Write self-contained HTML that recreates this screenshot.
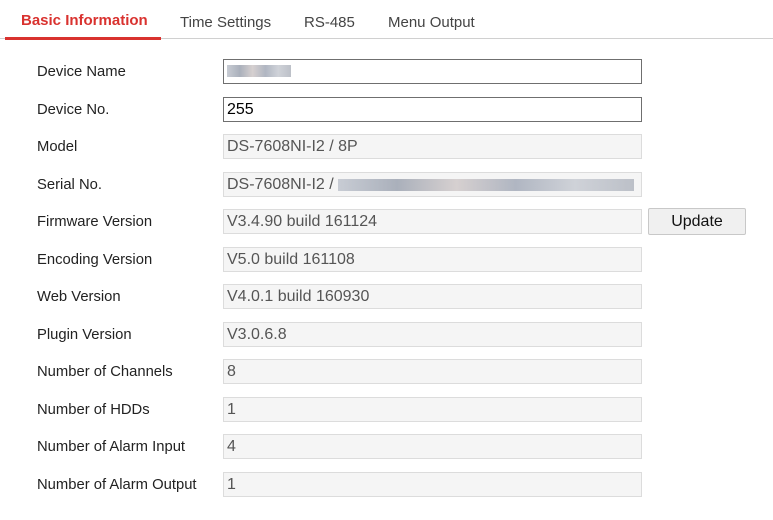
<!DOCTYPE html>
<html><head><style>
body{margin:0;width:773px;height:520px;background:#fff;font-family:"Liberation Sans",Arial,sans-serif;position:relative;overflow:hidden}
.tab{position:absolute;top:14px;font-size:15px;color:#444}
.line{position:absolute;left:0;top:38px;width:773px;height:1px;background:#d0d0d0}
.ul{position:absolute;left:5px;top:37px;width:156px;height:3px;background:#d9322f}
.lbl{position:absolute;left:37px;font-size:14.8px;color:#222;line-height:24px;margin-top:1px}
.in{position:absolute;left:223px;border:1px solid #dcdcdc;background:#f5f5f5;color:#555;font-size:16px;line-height:23px;padding-left:3px;box-sizing:border-box;width:419px;height:25px}
.ed{border:1px solid #6f6f6f;background:#fff;color:#000}
.blur{display:inline-block;height:12px;vertical-align:middle;background:linear-gradient(90deg,#c8ccd4,#aab0bb 20%,#d6d0d0 40%,#b0b6c2 60%,#cfd2d8 80%,#bcc0c8)}
.btn{position:absolute;left:648px;top:208px;width:98px;height:27px;border:1px solid #c8c8c8;border-radius:2px;background:#f0f0f0;font-size:16px;line-height:26px;text-align:center;color:#111;box-sizing:border-box}
</style></head><body>
<div class="tab" style="left:21px;top:12px;color:#d9322f;font-weight:bold">Basic Information</div>
<div class="tab" style="left:180px">Time Settings</div>
<div class="tab" style="left:304px">RS-485</div>
<div class="tab" style="left:388px">Menu Output</div>
<div class="line"></div><div class="ul"></div>

<div class="lbl" style="top:59px">Device Name</div><div class="in ed" style="top:59px"><span class="blur" style="width:64px;margin-top:-2px"></span></div>
<div class="lbl" style="top:97px">Device No.</div><div class="in ed" style="top:97px">255</div>
<div class="lbl" style="top:134px">Model</div><div class="in" style="top:134px">DS-7608NI-I2 / 8P</div>
<div class="lbl" style="top:172px">Serial No.</div><div class="in" style="top:172px">DS-7608NI-I2 / <span class="blur" style="width:296px"></span></div>
<div class="lbl" style="top:209px">Firmware Version</div><div class="in" style="top:209px">V3.4.90 build 161124</div>
<div class="btn">Update</div>
<div class="lbl" style="top:247px">Encoding Version</div><div class="in" style="top:247px">V5.0 build 161108</div>
<div class="lbl" style="top:284px">Web Version</div><div class="in" style="top:284px">V4.0.1 build 160930</div>
<div class="lbl" style="top:322px">Plugin Version</div><div class="in" style="top:322px">V3.0.6.8</div>
<div class="lbl" style="top:359px">Number of Channels</div><div class="in" style="top:359px">8</div>
<div class="lbl" style="top:397px">Number of HDDs</div><div class="in" style="top:397px">1</div>
<div class="lbl" style="top:434px">Number of Alarm Input</div><div class="in" style="top:434px">4</div>
<div class="lbl" style="top:472px">Number of Alarm Output</div><div class="in" style="top:472px">1</div>
</body></html>
